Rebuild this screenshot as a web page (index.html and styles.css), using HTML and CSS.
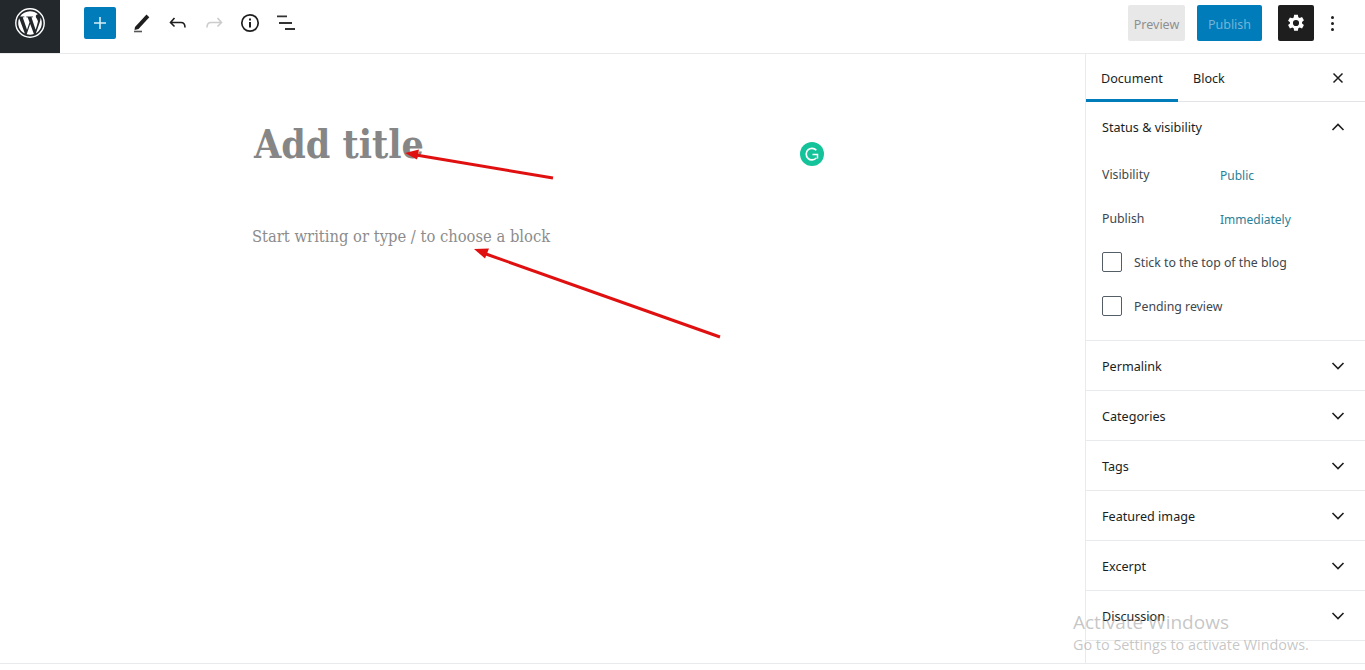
FILE: index.html
```html
<!DOCTYPE html>
<html lang="en">
<head>
    <meta charset="UTF-8">
    <meta name="viewport" content="width=device-width, initial-scale=1.0">
    <title>Add title</title>
    <link rel="stylesheet" href="styles.css">
</head>
<body>
    <div class="editor">
        <header class="topbar">
            <div class="wp-logo">
                <svg width="36" height="36" viewBox="0 0 36 36">
                    <circle cx="18" cy="18" r="14.2" fill="none" stroke="#fff" stroke-width="1.4"/>
                    <path fill="#fff" d="M6.2 18c0 4.7 2.7 8.700 6.700 10.600L7.200 13.200C6.500 14.700 6.200 16.300 6.200 18zM26 17.400c0-1.500-.5-2.500-1-3.300-.6-1-1.200-1.800-1.200-2.800 0-1.100.8-2.100 2-2.100h.2C23.900 7.300 21.100 6.200 18 6.200c-4.100 0-7.800 2.100-9.900 5.300h.8c1.200 0 3.100-.1 3.100-.1.600 0 .7.900.1.900 0 0-.6.100-1.300.1l4.200 12.400 2.500-7.500-1.800-4.900c-.6 0-1.200-.1-1.200-.1-.6 0-.5-1 .1-.9 0 0 1.900.1 3 .1 1.200 0 3.100-.1 3.100-.1.600 0 .7.900.1.900 0 0-.6.100-1.300.1l4.100 12.300 1.200-3.800c.5-1.600.9-2.800.9-3.800zM18.200 19l-3.500 10.200c1 .3 2.100.5 3.300.5 1.400 0 2.700-.2 3.900-.7l-.1-.2L18.200 19zM28.300 12.400c.1.400.1.800.1 1.300 0 1.200-.2 2.500-.9 4.200l-3.600 10.400c3.500-2 5.900-5.800 5.900-10.300 0-2.100-.5-4-1.500-5.600z"/>
                </svg>
            </div>
            <div class="tools">
                <button class="add-btn" type="button">
                    <svg width="16" height="16" viewBox="0 0 16 16"><path d="M8 2v12M2 8h12" stroke="#d8eef8" stroke-width="1.600" fill="none"/></svg>
                </button>
                <span class="tool">
                    <svg width="24" height="24" viewBox="0 0 24 24"><path d="M5 16 16.500 3.500l2.800 2.700L8.500 18 4.500 19z" fill="#1e1e1e"/><path d="M4 20.500h8" stroke="#555" stroke-width="1.600"/></svg>
                </span>
                <span class="tool">
                    <svg width="24" height="24" viewBox="0 0 24 24"><path d="M8.500 7 4.500 11.500l4 4M5 11.500h10c2.500 0 4 1.500 4 5" fill="none" stroke="#1e1e1e" stroke-width="1.600"/></svg>
                </span>
                <span class="tool">
                    <svg width="24" height="24" viewBox="0 0 24 24"><path d="M15.500 7l4 4.500-4 4M19 11.500H9c-2.500 0-4 1.500-4 5" fill="none" stroke="#ccc" stroke-width="1.600"/></svg>
                </span>
                <span class="tool">
                    <svg width="24" height="24" viewBox="0 0 24 24"><circle cx="12" cy="12" r="8.200" fill="none" stroke="#1e1e1e" stroke-width="1.700"/><path d="M11 11h2v5.500h-2zM11 7.500h2v2h-2z" fill="#1e1e1e"/></svg>
                </span>
                <span class="tool">
                    <svg width="24" height="24" viewBox="0 0 24 24"><path d="M3 5.300h10M5 12h13M11 18h10" fill="none" stroke="#333" stroke-width="1.800"/></svg>
                </span>
            </div>
            <div class="actions">
                <button class="btn-preview" type="button">Preview</button>
                <button class="btn-publish" type="button">Publish</button>
                <button class="btn-settings" type="button">
                    <svg width="22" height="22" viewBox="0 0 20 20"><path fill="#fff" fill-rule="evenodd" d="M8.300 2.500h3.400l.4 2.200 1.300.7 2.100-.8 1.700 3-1.700 1.400v1.500l1.700 1.400-1.700 3-2.100-.8-1.300.7-.4 2.200H8.300l-.4-2.200-1.300-.7-2.100.8-1.700-3 1.700-1.400V9.300L2.800 7.900l1.700-3 2.100.8 1.300-.7zM10 7.200a2.800 2.800 0 1 0 0 5.600 2.800 2.800 0 0 0 0-5.600z"/></svg>
                </button>
                <span class="more"><i></i><i></i><i></i></span>
            </div>
        </header>

        <div class="workspace">
            <main class="canvas">
                <h1 class="post-title">Add title</h1>
                <p class="post-body">Start writing or type / to choose a block</p>
            </main>

            <aside class="sidebar">
                <div class="tabs">
                    <span class="tab active">Document</span>
                    <span class="tab">Block</span>
                    <svg class="close" width="12" height="12" viewBox="0 0 12 12"><path d="M1.500 1.500l9 9M10.500 1.500l-9 9" stroke="#1e1e1e" stroke-width="1.500"/></svg>
                </div>

                <section class="panel panel-open">
                    <div class="panel-head">
                        <span>Status &amp; visibility</span>
                        <svg class="chev" width="14" height="8" viewBox="0 0 14 8"><path d="M1.500 7 7 1.500 12.500 7" fill="none" stroke="#1e1e1e" stroke-width="1.600"/></svg>
                    </div>
                    <div class="field"><span class="field-name">Visibility</span><a class="field-link">Public</a></div>
                    <div class="field"><span class="field-name">Publish</span><a class="field-link">Immediately</a></div>
                    <label class="check"><span class="box"></span>Stick to the top of the blog</label>
                    <label class="check"><span class="box"></span>Pending review</label>
                </section>

                <section class="panel"><div class="panel-head"><span>Permalink</span><svg class="chev" width="14" height="8" viewBox="0 0 14 8"><path d="M1.500 1 7 6.500 12.500 1" fill="none" stroke="#1e1e1e" stroke-width="1.600"/></svg></div></section>
                <section class="panel"><div class="panel-head"><span>Categories</span><svg class="chev" width="14" height="8" viewBox="0 0 14 8"><path d="M1.500 1 7 6.500 12.500 1" fill="none" stroke="#1e1e1e" stroke-width="1.600"/></svg></div></section>
                <section class="panel"><div class="panel-head"><span>Tags</span><svg class="chev" width="14" height="8" viewBox="0 0 14 8"><path d="M1.500 1 7 6.500 12.500 1" fill="none" stroke="#1e1e1e" stroke-width="1.600"/></svg></div></section>
                <section class="panel"><div class="panel-head"><span>Featured image</span><svg class="chev" width="14" height="8" viewBox="0 0 14 8"><path d="M1.500 1 7 6.500 12.500 1" fill="none" stroke="#1e1e1e" stroke-width="1.600"/></svg></div></section>
                <section class="panel"><div class="panel-head"><span>Excerpt</span><svg class="chev" width="14" height="8" viewBox="0 0 14 8"><path d="M1.500 1 7 6.500 12.500 1" fill="none" stroke="#1e1e1e" stroke-width="1.600"/></svg></div></section>
                <section class="panel"><div class="panel-head"><span>Discussion</span><svg class="chev" width="14" height="8" viewBox="0 0 14 8"><path d="M1.500 1 7 6.500 12.500 1" fill="none" stroke="#1e1e1e" stroke-width="1.600"/></svg></div></section>
            </aside>
        </div>
    </div>

    <!-- annotation arrows drawn over the screenshot -->
    <svg class="arrows" width="1365" height="670" viewBox="0 0 1365 670">
        <path d="M553 178 416 155" stroke="#e01010" stroke-width="3" fill="none"/>
        <path d="M405 153 419 149.500 417 159.500z" fill="#e01010"/>
        <path d="M720 337 486 254" stroke="#e01010" stroke-width="3" fill="none"/>
        <path d="M474 249 489 248.500 485 258.500z" fill="#e01010"/>
    </svg>

    <div class="grammarly">
        <svg width="24" height="24" viewBox="0 0 24 24"><circle cx="12" cy="12" r="12" fill="#15c39a"/><path d="M16.300 8.200A5.800 5.800 0 1 0 16.300 16" fill="none" stroke="#fff" stroke-width="1.700"/><path d="M12.500 12.500h5v4" fill="none" stroke="#fff" stroke-width="1.500"/></svg>
    </div>

    <div class="activate">
        <div class="activate-title">Activate Windows</div>
        <div class="activate-sub">Go to Settings to activate Windows.</div>
    </div>
</body>
</html>
```

FILE: styles.css
```css
html, body {
    margin: 0;
    padding: 0;
    height: 100%;
    overflow: hidden;
    background-color: #fff;
}

body {
    font-family: "Noto Sans", "Open Sans", sans-serif;
    color: #32373c;
}

.editor {
    display: flex;
    flex-direction: column;
    height: 664px;
    border-bottom: 1px solid #e8eaeb;
    box-sizing: border-box;
}

.topbar {
    display: flex;
    align-items: center;
    height: 54px;
    flex-shrink: 0;
    border-bottom: 1px solid #e8eaeb;
    box-sizing: border-box;
}

.wp-logo {
    display: flex;
    align-items: center;
    justify-content: center;
    width: 60px;
    height: 53px;
    padding-bottom: 7px;
    box-sizing: border-box;
    background-color: #23282d;
}

.tools {
    display: flex;
    align-items: center;
    gap: 12px;
    margin-left: 24px;
    margin-bottom: 7px;
}

.add-btn {
    display: flex;
    align-items: center;
    justify-content: center;
    width: 32px;
    height: 32px;
    padding: 0;
    margin-right: 2px;
    border: none;
    border-radius: 2px;
    background-color: #007cba;
}

.tool {
    display: flex;
    width: 24px;
    height: 24px;
}

.actions {
    display: flex;
    align-items: center;
    margin-left: auto;
    margin-right: 15px;
    margin-bottom: 7px;
}

.actions button {
    height: 36px;
    padding: 2px 0 0;
    border: none;
    border-radius: 2px;
    font-family: inherit;
    font-size: 12.500px;
}

.btn-preview {
    width: 57px;
    margin-right: 12px;
    background-color: #e8e8e8;
    color: #8f8f8f;
}

.btn-publish {
    width: 65px;
    margin-right: 16px;
    background-color: #007cba;
    color: #72b4d8;
}

.actions .btn-settings {
    display: flex;
    align-items: center;
    justify-content: center;
    width: 36px;
    padding: 0;
    background-color: #1e1e1e;
}

.more {
    display: flex;
    flex-direction: column;
    align-items: center;
    gap: 3px;
    width: 36px;
}

.more i {
    width: 3px;
    height: 3px;
    border-radius: 50%;
    background-color: #1e1e1e;
}

.workspace {
    display: flex;
    flex: 1;
    min-height: 0;
}

.canvas {
    flex: 1;
    padding: 64px 0 0 254px;
}

.post-title {
    margin: 0;
    font-family: "DejaVu Serif Condensed", "DejaVu Serif", serif;
    font-size: 39px;
    line-height: 52px;
    font-weight: 700;
    color: #868686;
}

.post-body {
    margin: 54px 0 0 -2px;
    font-family: "DejaVu Serif Condensed", "DejaVu Serif", serif;
    font-size: 16.400px;
    line-height: 26px;
    color: #8c8c8c;
}

.sidebar {
    width: 280px;
    flex-shrink: 0;
    border-left: 1px solid #e8eaeb;
    box-sizing: border-box;
    font-size: 12.600px;
}

.tabs {
    display: flex;
    align-items: center;
    height: 48px;
    border-bottom: 1px solid #e2e4e7;
    box-sizing: border-box;
    color: #191e23;
}

.tab {
    display: flex;
    align-items: center;
    height: 48px;
    padding: 2px 15px 0;
    box-sizing: border-box;
}

.tab.active {
    width: 92px;
    border-bottom: 3px solid #007cba;
    padding-top: 5px;
}

.close {
    margin-left: auto;
    margin-right: 21px;
}

.panel {
    height: 50px;
    border-bottom: 1px solid #e8eaeb;
    box-sizing: border-box;
}

.panel-open {
    height: 239px;
}

.panel-head {
    display: flex;
    align-items: center;
    justify-content: space-between;
    height: 50px;
    padding: 0 20px 0 16px;
    box-sizing: border-box;
    color: #191e23;
}

.field {
    display: flex;
    align-items: center;
    height: 44px;
    padding-left: 16px;
    font-size: 12.300px;
}

.field-name {
    width: 118px;
    color: #40464d;
}

.field-link {
    color: #2a7f98;
    padding-top: 2px;
    font-size: 12px;
}

.check {
    display: flex;
    align-items: center;
    height: 44px;
    padding-left: 16px;
    font-size: 12.300px;
    color: #40464d;
}

.box {
    width: 20px;
    height: 20px;
    margin-right: 12px;
    border: 1px solid #555d66;
    border-radius: 2px;
    box-sizing: border-box;
}

.arrows {
    position: absolute;
    left: 0;
    top: 0;
    pointer-events: none;
}

.grammarly {
    position: absolute;
    left: 800px;
    top: 142px;
    width: 24px;
    height: 24px;
}

.activate {
    position: absolute;
    left: 1073px;
    top: 610px;
    color: rgba(150, 150, 150, 0.55);
    pointer-events: none;
}

.activate-title {
    font-family: "Open Sans", sans-serif;
    font-size: 19px;
    line-height: 25px;
}

.activate-sub {
    font-family: "Open Sans", sans-serif;
    font-size: 14.400px;
    line-height: 20px;
}
```
